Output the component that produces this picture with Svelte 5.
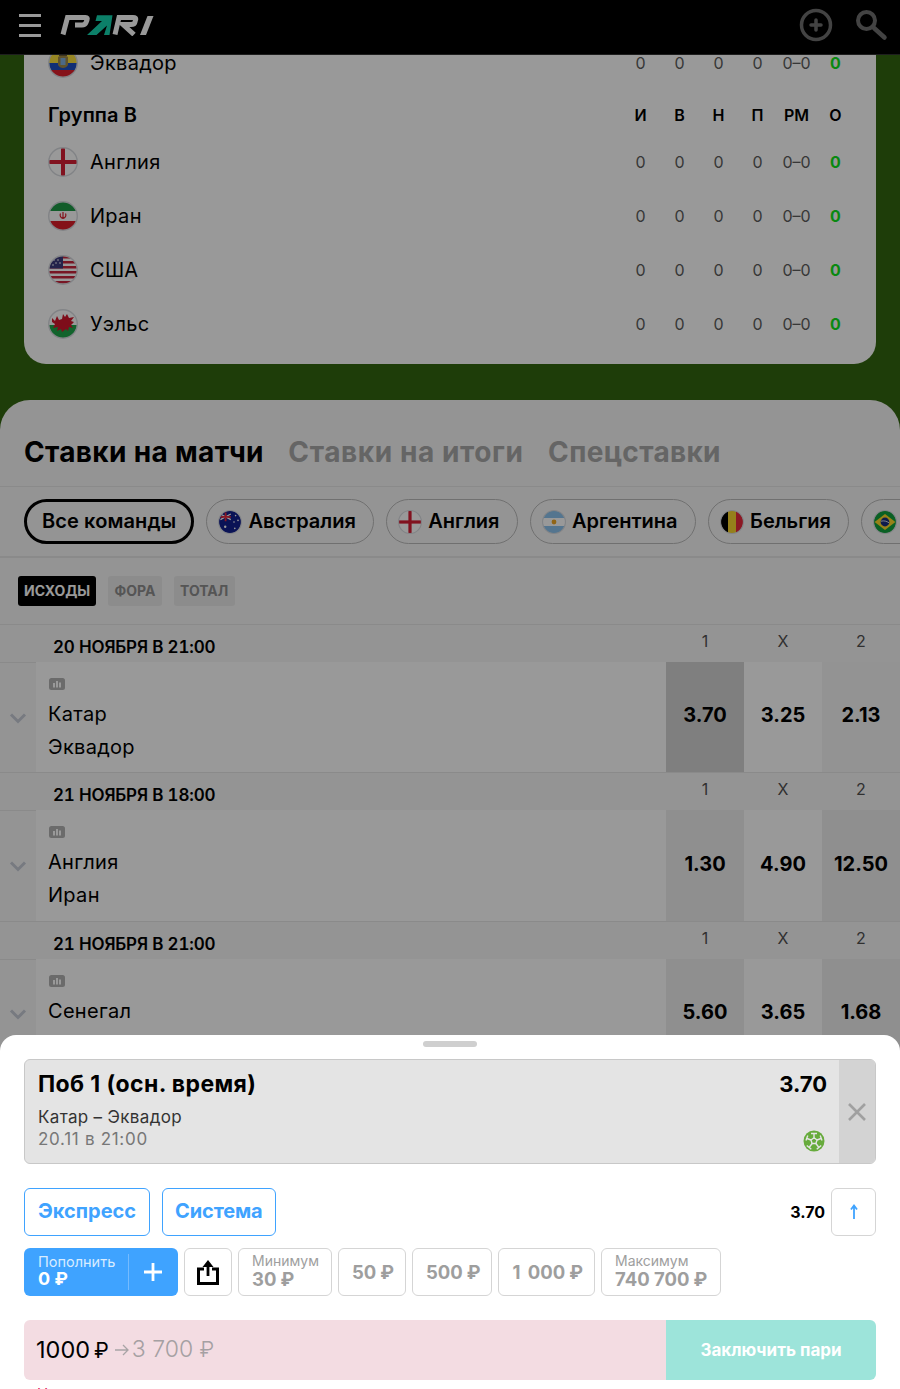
<script>
  const teams = [
    { flag: 'england', name: 'Англия' },
    { flag: 'iran', name: 'Иран' },
    { flag: 'usa', name: 'США' },
    { flag: 'wales', name: 'Уэльс' }
  ];
  const statCols = ['И', 'В', 'Н', 'П', 'РМ', 'О'];
  const pills = [
    { flag: 'australia', name: 'Австралия' },
    { flag: 'england', name: 'Англия' },
    { flag: 'argentina', name: 'Аргентина' },
    { flag: 'belgium', name: 'Бельгия' },
    { flag: 'brazil', name: 'Бразилия' }
  ];
  const matches = [
    { date: '20 ноября в 21:00', a: 'Катар', b: 'Эквадор', odds: ['3.70', '3.25', '2.13'], shade: ['sel', 'plain', 'soft'] },
    { date: '21 ноября в 18:00', a: 'Англия', b: 'Иран', odds: ['1.30', '4.90', '12.50'], shade: ['tint', 'plain', 'tint'] },
    { date: '21 ноября в 21:00', a: 'Сенегал', b: 'Нидерланды', odds: ['5.60', '3.65', '1.68'], shade: ['tint', 'plain', 'tint'] }
  ];
  const amounts = ['50', '500', '1 000'];
</script>

{#snippet flag(kind, size)}
  <svg class="flag" width={size} height={size} viewBox="0 0 30 30">
    <defs><clipPath id="c-{kind}-{size}"><circle cx="15" cy="15" r="14" /></clipPath></defs>
    <g clip-path="url(#c-{kind}-{size})">
      {#if kind === 'ecuador'}
        <rect width="30" height="15" fill="#fadf3c" /><rect y="15" width="30" height="8" fill="#1d4fc4" /><rect y="22" width="30" height="8" fill="#e0202c" />
        <path d="M10 9c3-2 7-2 10 0v8c-1 2-3 3-5 3s-4-1-5-3z" fill="#a08a4a" /><rect x="12.500" y="10" width="5" height="7" fill="#7fb0e0" /><rect x="11" y="6.500" width="8" height="1.500" fill="#6b5a30" />
      {:else if kind === 'england'}
        <rect width="30" height="30" fill="#fff" /><rect x="13" width="4" height="30" fill="#d81e34" /><rect y="13" width="30" height="4" fill="#d81e34" />
      {:else if kind === 'iran'}
        <rect width="30" height="10" fill="#1f9a46" /><rect y="10" width="30" height="10" fill="#fff" /><rect y="20" width="30" height="10" fill="#dc1f2b" />
        <path d="M15 11v7M12.500 12.500c-1 2 0 4.500 2.500 5M17.500 12.500c1 2 0 4.500-2.500 5" stroke="#dc1f2b" stroke-width="1.200" fill="none" />
      {:else if kind === 'usa'}
        <rect width="30" height="30" fill="#fff" />
        <rect y="1" width="30" height="2.500" fill="#c8263c" /><rect y="6" width="30" height="2.500" fill="#c8263c" /><rect y="11" width="30" height="2.500" fill="#c8263c" /><rect y="16" width="30" height="2.500" fill="#c8263c" /><rect y="21" width="30" height="2.500" fill="#c8263c" /><rect y="26" width="30" height="2.500" fill="#c8263c" />
        <rect width="15" height="13.500" fill="#3c3b7e" />
        <circle cx="6" cy="5" r=".8" fill="#fff" /><circle cx="10" cy="5" r=".8" fill="#fff" /><circle cx="8" cy="8" r=".8" fill="#fff" /><circle cx="12" cy="8" r=".8" fill="#fff" /><circle cx="5" cy="10" r=".8" fill="#fff" />
      {:else if kind === 'wales'}
        <rect width="30" height="16" fill="#fff" /><rect y="16" width="30" height="14" fill="#1fa64a" />
        <path d="M4 9l3 3 2-5 2 4 3-1 1-5 2 3 2-3 2 4 5-1-3 4 3 1-3 3 2 3-4-1-1 4-2-2-4 3-1-3-4 2 1-4-5 1 2-4-3-2z" fill="#d2172c" />
      {:else if kind === 'australia'}
        <rect width="30" height="30" fill="#12208f" />
        <path d="M3 5l13 7M16 5L3 12" stroke="#fff" stroke-width="1.500" /><path d="M9.500 3v11M3 8.500h13" stroke="#e8283c" stroke-width="2.200" />
        <circle cx="22" cy="7" r="1" fill="#fff" /><circle cx="25" cy="13" r="1" fill="#fff" /><circle cx="20" cy="15" r="1" fill="#fff" /><circle cx="21" cy="23" r="1" fill="#fff" /><circle cx="9" cy="21" r="1.500" fill="#fff" />
      {:else if kind === 'argentina'}
        <rect width="30" height="30" fill="#8cc4ee" /><rect y="10" width="30" height="10" fill="#fff" /><circle cx="15" cy="15" r="3" fill="#f0a825" />
      {:else if kind === 'belgium'}
        <rect width="10" height="30" fill="#000" /><rect x="10" width="10" height="30" fill="#f8d42e" /><rect x="20" width="10" height="30" fill="#e8283c" />
      {:else if kind === 'brazil'}
        <rect width="30" height="30" fill="#12a03c" /><path d="M15 5l13 10-13 10L2 15z" fill="#fcd92a" /><circle cx="15" cy="15" r="5.500" fill="#19307f" /><path d="M10 14c4-1 7 0 10 2" stroke="#fff" stroke-width="1" fill="none" />
      {/if}
    </g>
    <circle cx="15" cy="15" r="14.300" fill="none" stroke="#d8dbe0" stroke-width="1.400" />
  </svg>
{/snippet}

<div class="page">
  <header class="topbar">
    <div class="burger"><span></span><span></span><span></span></div>
    <svg class="logo" width="96" height="22" viewBox="0 0 96 22" aria-label="PARI">
      <g fill="none" stroke="#fff" stroke-width="5">
        <path d="M3 20.500 7.500 3.500H25.500Q28 3.500 27 6L26 8.500Q25 11 22 11H15" />
        <path d="M55 20.500 59 3.500H73Q76.500 3.500 75.500 6L75 8Q74.500 10.500 71 10.500H63L74 20.500" />
      </g>
      <path d="M80 21h6L93.500 2H87.500z" fill="#fff" />
      <path d="M52.500 1.300H37L35.500 7H42L27 21H36.500L47 11.500 44 21H49.500z" fill="#15d6b0" />
    </svg>
    <div class="spacer"></div>
    <svg class="hicon" width="34" height="34" viewBox="0 0 34 34">
      <circle cx="17" cy="17" r="14.500" fill="none" stroke="#717171" stroke-width="3.500" />
      <path d="M17 12v10M12 17h10" stroke="#717171" stroke-width="3.500" stroke-linecap="round" />
    </svg>
    <svg class="hicon search" width="34" height="34" viewBox="0 0 34 34">
      <circle cx="12.500" cy="12.500" r="8.500" fill="none" stroke="#717171" stroke-width="4" />
      <path d="M20 20l10.500 9.500" stroke="#717171" stroke-width="4.500" stroke-linecap="round" />
    </svg>
  </header>

  <main class="content">
    <section class="hero">
      <div class="group-card">
        <div class="trow first">
          <div class="team">{@render flag('ecuador', 30)}<span>Эквадор</span></div>
          <div class="stats">
            {#each [0, 0, 0, 0] as v}<span>{v}</span>{/each}<span>0–0</span><span class="pts">0</span>
          </div>
        </div>
        <div class="thead">
          <div class="gname">Группа B</div>
          <div class="stats heads">{#each statCols as c}<span>{c}</span>{/each}</div>
        </div>
        {#each teams as t}
          <div class="trow">
            <div class="team">{@render flag(t.flag, 30)}<span>{t.name}</span></div>
            <div class="stats">
              {#each [0, 0, 0, 0] as v}<span>{v}</span>{/each}<span>0–0</span><span class="pts">0</span>
            </div>
          </div>
        {/each}
      </div>
    </section>

    <section class="bets">
      <nav class="tabs">
        <span class="tab on">Ставки на матчи</span>
        <span class="tab mid">Ставки на итоги</span>
        <span class="tab">Спецставки</span>
      </nav>
      <div class="pills">
        <span class="pill all">Все команды</span>
        {#each pills as p}
          <span class="pill">{@render flag(p.flag, 24)}{p.name}</span>
        {/each}
      </div>
      <div class="chips">
        <span class="chip active">Исходы</span>
        <span class="chip">Фора</span>
        <span class="chip">Тотал</span>
      </div>
      {#each matches as m}
        <div class="date-row">
          <span class="date">{m.date}</span>
          <div class="cols"><span>1</span><span>X</span><span>2</span></div>
        </div>
        <div class="match">
          <div class="chev">
            <svg width="18" height="12" viewBox="0 0 18 12"><path d="M2 2.500l7 7 7-7" fill="none" stroke="#c6cbd6" stroke-width="3" /></svg>
          </div>
          <div class="teams">
            <svg class="stat-ic" width="16" height="12" viewBox="0 0 16 12">
              <rect width="16" height="12" rx="2.500" fill="#b2b2b2" />
              <rect x="4" y="5" width="2" height="4.500" fill="#fff" /><rect x="7" y="3" width="2" height="6.500" fill="#fff" /><rect x="10" y="4.500" width="2" height="5" fill="#fff" />
            </svg>
            <div class="tname">{m.a}</div>
            <div class="tname">{m.b}</div>
          </div>
          {#each m.odds as o, i}
            <div class="odd {m.shade[i]}">{o}</div>
          {/each}
        </div>
      {/each}
    </section>
  </main>

  <div class="overlay"></div>

  <aside class="sheet">
    <div class="handle"></div>
    <div class="slip">
      <div class="slip-main">
        <div class="slip-top"><span class="market">Поб 1 (осн. время)</span><span class="coef">3.70</span></div>
        <div class="slip-bottom">
          <div>
            <div class="event">Катар – Эквадор</div>
            <div class="when">20.11 в 21:00</div>
          </div>
          <svg width="22" height="22" viewBox="0 0 22 22">
            <circle cx="11" cy="11" r="10.500" fill="#67ab3c" />
            <g fill="none" stroke="#e4e4e4" stroke-width="1.400">
              <path d="M11 7.800l3 2.200-1.100 3.500H9.100L8 10z" />
              <path d="M11 7.800V3.500M8 3.500h6M8 10 4 8.500M4.800 5.500 3 10.500M14 10l4-1.500M17.200 5.500l1.800 5M9.100 13.500l-2.600 3.500M3.800 15.500l4.500 3.800M12.900 13.500l2.600 3.500M18.200 15.500l-4.500 3.800" />
            </g>
          </svg>
        </div>
      </div>
      <div class="slip-close">
        <svg width="20" height="20" viewBox="0 0 20 20"><path d="M2 2l16 16M18 2L2 18" stroke="#a0a0a0" stroke-width="2.600" /></svg>
      </div>
    </div>

    <div class="modes">
      <button class="mode">Экспресс</button>
      <button class="mode">Система</button>
      <div class="spacer"></div>
      <span class="total">3.70</span>
      <button class="up" aria-label="Вверх">
        <svg width="10" height="16" viewBox="0 0 10 16"><path d="M5 15V2M2 5.500 5 1.500l3 4" fill="none" stroke="#3fa3ff" stroke-width="1.800" /></svg>
      </button>
    </div>

    <div class="quick">
      <button class="deposit">
        <span class="dep-text"><small>Пополнить</small><b>0 ₽</b></span>
        <span class="dep-plus">
          <svg width="18" height="18" viewBox="0 0 18 18"><path d="M9 0v18M0 9h18" stroke="#fff" stroke-width="2.800" /></svg>
        </span>
      </button>
      <button class="qbtn share" aria-label="Поделиться">
        <svg width="22" height="26" viewBox="0 0 22 26">
          <path d="M7 10H1.500v14.500h19V10H15" fill="none" stroke="#000" stroke-width="3" />
          <path d="M11 17V4" stroke="#000" stroke-width="2.800" /><path d="M5.500 8 11 1 16.500 8z" fill="#000" />
        </svg>
      </button>
      <button class="qbtn two"><small>Минимум</small><b>30<i>₽</i></b></button>
      {#each amounts as a}<button class="qbtn amount"><b class="spaced">{a}<i>₽</i></b></button>{/each}
      <button class="qbtn two max"><small>Максимум</small><b>740 700<i>₽</i></b></button>
    </div>

    <div class="placebar">
      <div class="stake">
        <span class="sum">1000<i>₽</i></span>
        <svg class="arrow" width="14" height="12" viewBox="0 0 14 12"><path d="M0 6h13M8 1l5 5-5 5" fill="none" stroke="#a8a4a6" stroke-width="1.300" /></svg>
        <span class="win">3 700 <i>₽</i></span>
      </div>
      <button class="place">Заключить пари</button>
    </div>
    <div class="error">Недостаточно средств</div>
  </aside>
</div>

<style>
  :global(body) { margin: 0; background: #fff; }
  .page {
    position: relative; width: 900px; height: 1389px; overflow: hidden;
    font-family: Inter, "Noto Sans", sans-serif; color: #000;
  }
  .spacer { flex: 1; }
  button { font-family: inherit; background: none; padding: 0; cursor: pointer; }
  svg { display: block; flex: none; }

  .topbar {
    position: relative; z-index: 2; background: #000; border-bottom: 1px solid #333;
    display: flex; align-items: center; padding: 0 12px 4px 19px; height: 50px;
  }
  .burger { display: flex; flex-direction: column; gap: 7px; width: 22px; margin-right: 19px; }
  .burger span { height: 3px; background: #fff; }
  .hicon { margin-right: 22px; }
  .hicon.search { margin-right: 0; margin-left: -1px; }

  .content { background: #32660f; }
  .hero { padding: 0 24px 36px; height: 345px; box-sizing: border-box; }
  .group-card {
    display: flow-root; background: #fff; border-radius: 0 0 22px 22px; padding: 0 21px 13px 24px; height: 309px;
    box-sizing: border-box;
  }
  .trow { height: 54px; display: flex; align-items: center; justify-content: space-between; }
  .trow.first { margin-top: -19px; }
  .team { display: flex; align-items: center; gap: 12px; font-size: 20px; letter-spacing: .3px; }
  .thead { height: 45px; padding-top: 5px; box-sizing: border-box; display: flex; align-items: center; justify-content: space-between; }
  .gname { font-size: 20px; font-weight: 600; letter-spacing: .1px; }
  .stats { display: grid; grid-template-columns: repeat(6, 39px); font-size: 16px; color: #5c5c5c; text-align: center; }
  .stats.heads { color: #000; font-weight: 600; font-size: 16px; }
  .pts { color: #10e41c; font-weight: 700; }

  .bets { background: #f7f7f7; border-radius: 30px 30px 0 0; height: 990px; }
  .tabs {
    display: flex; gap: 24.500px; padding: 18px 24px 0; height: 87px; box-sizing: border-box;
    border-bottom: 1px solid #e6e6e6; align-items: center;
  }
  .tab { font-size: 28px; font-weight: 700; color: #a8a8a8; line-height: 36px; letter-spacing: .33px; }
  .tab.mid { letter-spacing: .6px; }
  .tab.on { color: #000; }
  .pills {
    display: flex; gap: 12px; padding: 12px 0 13px 24px; height: 71px; box-sizing: border-box;
    border-bottom: 2px solid #e6e6e6; overflow: hidden;
  }
  .pill {
    flex: none; height: 45px; box-sizing: border-box; border: 1px solid #bbb; border-radius: 23px;
    display: flex; align-items: center; gap: 6px; padding: 0 17.400px 2px 11px;
    font-size: 20px; font-weight: 600; white-space: nowrap;
  }
  .pill :global(svg) { margin-top: 2px; }
  .pill.all { border: 3px solid #000; padding: 0 15px 2px; letter-spacing: .1px; }
  .chips { display: flex; gap: 12px; padding: 18px; height: 66px; box-sizing: border-box; }
  .chip {
    height: 30px; padding: 0 6.300px 2px; box-sizing: border-box; background: #e9e9e9; border-radius: 3px; display: flex; align-items: center;
    font-size: 14px; font-weight: 700; text-transform: uppercase; color: #8e8e8e;
  }
  .chip.active { background: #000; color: #fff; padding: 0 6px 2px; }
  .date-row {
    height: 39px; box-sizing: border-box; border-top: 1px solid #e6e6e6; border-bottom: 1px solid #e6e6e6;
    display: flex; justify-content: space-between; padding-left: 53px;
  }
  .date { font-size: 17px; font-weight: 600; text-transform: uppercase; line-height: 45px; font-variant-numeric: tabular-nums; letter-spacing: -.18px; }
  .cols { display: grid; grid-template-columns: repeat(3, 78px); text-align: center; font-size: 16px; line-height: 32px; color: #505050; }
  .match { display: flex; height: 110.400px; margin-top: -1px; }
  .chev { width: 36px; display: flex; align-items: center; justify-content: center; padding-top: 1px; box-sizing: border-box; }
  .teams { flex: 1; background: #fff; padding: 16px 12px 0; box-sizing: border-box; }
  .stat-ic { margin-bottom: 8px; margin-left: 1px; }
  .tname { font-size: 20px; line-height: 33px; letter-spacing: .3px; }
  .odd { width: 78px; display: flex; align-items: center; justify-content: center; font-size: 20px; font-weight: 700; padding-bottom: 4px; box-sizing: border-box; }
  .odd.sel { background: #d4d4d4; }
  .odd.plain { background: #fff; }
  .odd.soft { background: #f5f5f5; }
  .odd.tint { background: #eeeeee; }

  .overlay { position: absolute; inset: 0; background: rgba(0, 0, 0, .4); z-index: 3; }

  .sheet {
    position: absolute; left: 0; right: 0; bottom: 0; top: 1035px; z-index: 4; background: #fff;
    border-radius: 16px 16px 0 0; padding: 24px 24px 0; box-sizing: border-box;
  }
  .handle { position: absolute; left: 423px; top: 6px; width: 54px; height: 6px; border-radius: 3px; background: #cfcfcf; }
  .slip {
    display: flex; height: 105px; box-sizing: border-box; border: 1px solid #c8c8c8; border-radius: 6px;
    background: #e4e4e4; overflow: hidden;
  }
  .slip-main { flex: 1; padding: 9px 12px 0 13px; min-width: 0; }
  .slip-top { display: flex; justify-content: space-between; font-size: 22px; font-weight: 700; line-height: 30px; }
  .market { font-size: 23px; letter-spacing: .4px; }
  .slip-bottom { display: flex; justify-content: space-between; align-items: flex-end; margin-top: 7px; }
  .slip-bottom svg { margin-right: 2px; margin-bottom: -2px; }
  .event { font-size: 17px; line-height: 22px; color: #333; letter-spacing: .33px; }
  .when { font-size: 17px; line-height: 22px; color: #777; letter-spacing: .7px; }
  .slip-close { width: 36px; background: #d3d3d3; display: flex; align-items: center; justify-content: center; }

  .modes { display: flex; align-items: center; gap: 12px; margin-top: 24px; height: 48px; }
  .mode {
    height: 48px; box-sizing: border-box; border: 1px solid #3fa3ff; border-radius: 6px; padding: 0 13px 2px;
    font-size: 20px; font-weight: 700; color: #3fa3ff;
  }
  .mode + .mode { padding: 0 12px 2px; letter-spacing: -.15px; }
  .total { font-size: 16px; font-weight: 700; margin-right: -6px; }
  .up {
    width: 45px; height: 48px; border: 1px solid #d5d5d5; border-radius: 6px; display: flex; align-items: center; justify-content: center;
  }
  .quick { display: flex; gap: 6px; margin-top: 12px; height: 48px; }
  .deposit {
    width: 154px; border: 0; border-radius: 6px; background: #3fa3ff; color: #fff; display: flex; text-align: left;
    align-items: center;
  }
  .dep-text { display: flex; flex-direction: column; padding: 0 0 5px 14px; width: 90px; line-height: 17px; }
  .dep-text small { font-size: 14.500px; color: #d8ecff; }
  .dep-text b { font-size: 18px; }
  .dep-plus { flex: 1; height: 36px; border-left: 1px solid #74bbff; display: flex; align-items: center; justify-content: center; padding-right: 2px; box-sizing: border-box; }
  .qbtn {
    box-sizing: border-box; height: 48px; border: 1px solid #d5d5d5; border-radius: 6px; padding: 0 12px 0 13px; color: #9e9e9e;
    display: flex; flex-direction: column; justify-content: center; align-items: flex-start; white-space: nowrap;
  }
  .qbtn b { font-size: 18.500px; font-weight: 700; line-height: 22px; }
  .qbtn b.spaced { word-spacing: 3px; }
  .qbtn b i { font-style: normal; margin-left: 4px; }
  .qbtn small { font-size: 14px; line-height: 16px; }
  .qbtn.amount { padding-right: 11px; }
  .qbtn.two { padding-bottom: 2px; }
  .qbtn.two b { line-height: 20px; }
  .qbtn.max { padding-right: 13px; }
  .qbtn.share { width: 48px; padding: 0; align-items: center; }
  .placebar { display: flex; height: 60px; margin-top: 24px; border-radius: 6px; overflow: hidden; }
  .stake { flex: 1; background: #f3dce2; display: flex; align-items: center; padding: 0 0 2px 12px; font-size: 23.500px; }
  .sum { color: #000; }
  .sum i, .win i { font-style: normal; }
  .sum i { margin-left: 4px; font-size: 21px; }
  .arrow { margin: 2px 3px 0 6px; }
  .win { color: #a5a0a2; font-weight: 300; font-size: 23px; }
  .win i { font-size: 22px; }
  .place { width: 210px; border: 0; background: #9de4da; color: #fff; font-size: 17px; font-weight: 700; }
  .error { margin: 5px 0 0 13px; font-size: 15px; line-height: 18px; color: #e0205a; }
</style>
